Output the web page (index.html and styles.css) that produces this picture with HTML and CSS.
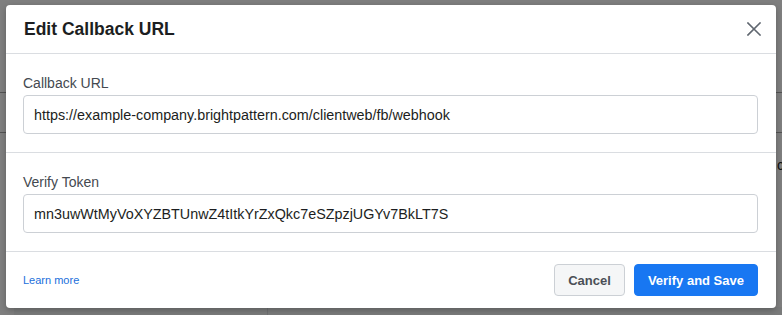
FILE: index.html
```html
<!DOCTYPE html>
<html lang="en">
<head>
<meta charset="utf-8">
<title>Edit Callback URL</title>
<link rel="stylesheet" href="styles.css">
</head>
<body>
<div class="page">
  <div class="page-rule"></div>
  <div class="page-row"></div>
  <div class="page-rule"></div>
  <div class="page-status">connected</div>
  <div class="page-table-head">
    <div class="th th-pages">Pages <span class="sort">▲</span></div>
    <div class="th th-hooks">Webhooks</div>
  </div>
</div>

<div class="overlay">
  <div class="dialog" role="dialog" aria-labelledby="dlg-title">
    <div class="dialog-header">
      <h2 class="dialog-title" id="dlg-title">Edit Callback URL</h2>
      <button class="close-btn" aria-label="Close">
        <svg width="14" height="14" viewBox="0 0 14 14" aria-hidden="true">
          <path d="M1 1 L13 13 M13 1 L1 13" stroke="#606770" stroke-width="1.6" stroke-linecap="square" fill="none"/>
        </svg>
      </button>
    </div>
    <div class="field-section">
      <label class="field-label" for="cb-url">Callback URL</label>
      <input class="field-input" id="cb-url" type="text" value="https://example-company.brightpattern.com/clientweb/fb/webhook">
    </div>
    <div class="field-section">
      <label class="field-label" for="vt">Verify Token</label>
      <input class="field-input" id="vt" type="text" value="mn3uwWtMyVoXYZBTUnwZ4tItkYrZxQkc7eSZpzjUGYv7BkLT7S">
    </div>
    <div class="dialog-footer">
      <a class="learn-more" href="#">Learn more</a>
      <div class="actions">
        <button class="btn btn-cancel">Cancel</button>
        <button class="btn btn-primary">Verify and Save</button>
      </div>
    </div>
  </div>
</div>
</body>
</html>
```
FILE: styles.css
```css
html, body {
  margin: 0;
  padding: 0;
}
body {
  font-family: "Liberation Sans", Arial, Helvetica, sans-serif;
  background: #ffffff;
  width: 782px;
  height: 315px;
  overflow: hidden;
  position: relative;
}

/* underlying page (dimmed by the overlay) */
.page {
  height: 315px;
  overflow: hidden;
  padding-top: 92px;
  box-sizing: border-box;
}
.page-rule {
  height: 1px;
  background: #000000;
  opacity: 0.35;
}
.page-row {
  height: 39px;
}
.page-status {
  padding-left: 777px;
  padding-top: 23px;
  font-size: 14px;
  line-height: 18px;
  white-space: nowrap;
  color: #1c1e21;
}
.page-table-head {
  margin-top: 133px;
  margin-left: 14px;
  display: flex;
  background: #f5f6f7;
  height: 30px;
}
.th {
  font-size: 14px;
  line-height: 20px;
  padding-top: 6px;
  color: #1c1e21;
}
.th-pages {
  width: 240px;
  padding-left: 13px;
  border-right: 1px solid #dddfe2;
}
.th-hooks {
  padding-left: 9px;
}
.sort {
  font-size: 11px;
}

/* modal */
.overlay {
  position: absolute;
  inset: 0;
  background: rgba(0, 0, 0, 0.5);
  padding: 5px 6px 0 6px;
}
.dialog {
  width: 770px;
  height: 303px;
  background: #ffffff;
  border-radius: 4px;
  box-shadow: 0 2px 6px rgba(0, 0, 0, 0.25);
  display: flex;
  flex-direction: column;
  overflow: hidden;
}
.dialog-header {
  height: 48px;
  flex: none;
  display: flex;
  align-items: center;
  justify-content: space-between;
  padding: 0 15px 0 18px;
  border-bottom: 1px solid #dadde1;
}
.dialog-title {
  margin: 0;
  font-size: 17.5px;
  font-weight: bold;
  color: #1c1e21;
}
.close-btn {
  border: 0;
  background: none;
  padding: 0;
  width: 14px;
  height: 14px;
  display: flex;
  cursor: pointer;
}
.field-section {
  padding: 20px 18px 18px 17px;
  border-bottom: 1px solid #dadde1;
  display: flex;
  flex-direction: column;
  gap: 3px;
}
.field-label {
  font-size: 14px;
  line-height: 18px;
  color: #444950;
}
.field-input {
  box-sizing: border-box;
  height: 39px;
  width: 100%;
  border: 1px solid #ccd0d5;
  border-radius: 4px;
  padding: 0 10px;
  font-family: inherit;
  font-size: 14.35px;
  color: #1c1e21;
  background: #ffffff;
  outline: none;
}
.dialog-footer {
  flex: 1;
  display: flex;
  align-items: center;
  justify-content: space-between;
  padding: 0 18px 0 17px;
}
.learn-more {
  font-size: 11px;
  color: #216fdb;
  text-decoration: none;
}
.actions {
  display: flex;
  gap: 9px;
}
.btn {
  box-sizing: border-box;
  height: 32px;
  border-radius: 4px;
  font-family: inherit;
  font-size: 13px;
  font-weight: bold;
  padding: 0 13px;
  cursor: pointer;
}
.btn-cancel {
  background: #f5f6f7;
  border: 1px solid #ccd0d5;
  color: #4b4f56;
}
.btn-primary {
  background: #1877f2;
  border: 1px solid #1877f2;
  color: #ffffff;
}
```
